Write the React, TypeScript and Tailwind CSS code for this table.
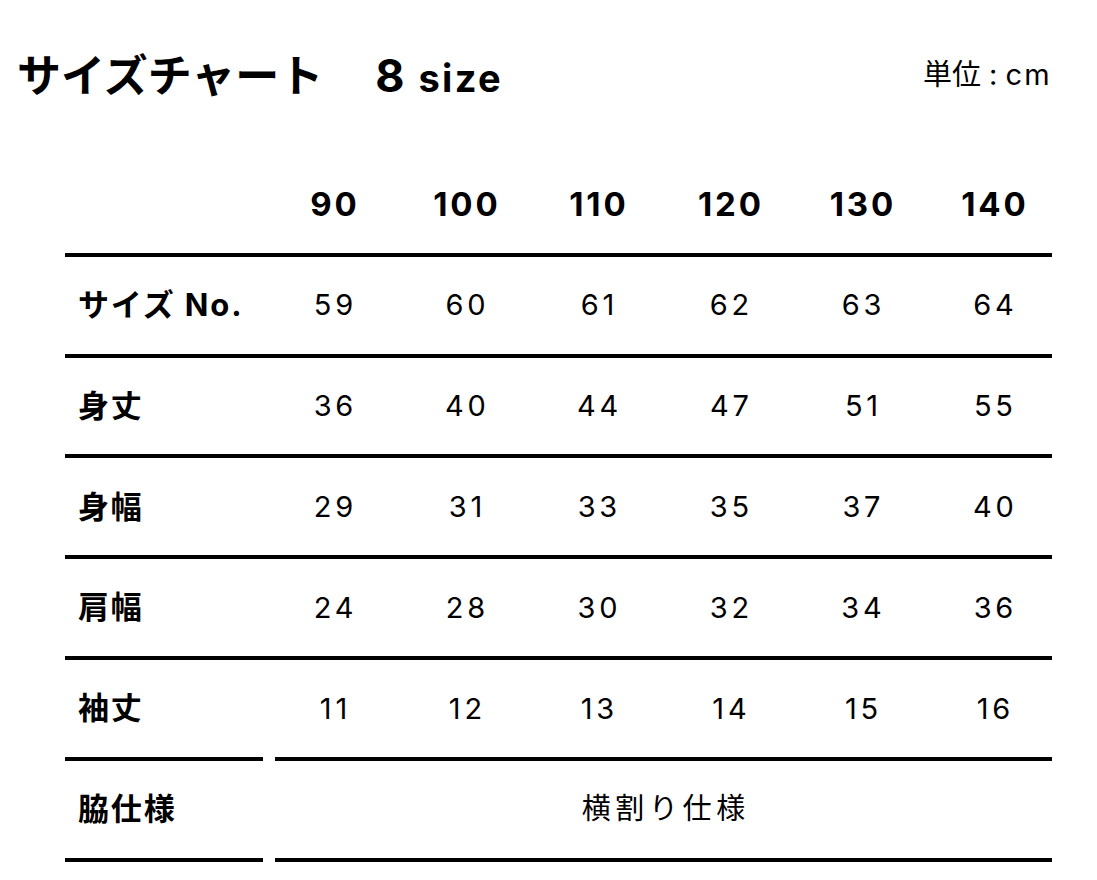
import React from 'react';

const sizes = ['90', '100', '110', '120', '130', '140'];

const rows: { label: string; values?: string[]; text?: string; split?: boolean }[] = [
  { label: 'サイズ No.', values: ['59', '60', '61', '62', '63', '64'] },
  { label: '身丈', values: ['36', '40', '44', '47', '51', '55'] },
  { label: '身幅', values: ['29', '31', '33', '35', '37', '40'] },
  { label: '肩幅', values: ['24', '28', '30', '32', '34', '36'] },
  { label: '袖丈', values: ['11', '12', '13', '14', '15', '16'], split: true },
  { label: '脇仕様', text: '横割り仕様', split: true },
];

const font = { fontFamily: 'Inter, "Noto Sans CJK JP", sans-serif' };

const Row: React.FC<{ label?: string; split?: boolean; children: React.ReactNode }> = ({ label, split, children }) => (
  <div className={`flex h-[100.8px] ${split ? '' : 'border-b-4 border-black'}`}>
    <div className={`w-[198px] shrink-0 flex items-center pl-[13px] text-[31px] font-bold tracking-[0.06em] ${split ? 'border-b-4 border-black' : ''}`}>
      {label}
    </div>
    <div className={`ml-[12px] flex-1 flex items-center ${split ? 'border-b-4 border-black' : ''}`}>{children}</div>
  </div>
);

const Cells: React.FC<{ values: string[]; bold?: boolean }> = ({ values, bold }) => (
  <div className="-mx-[7.5px] grid flex-1 grid-cols-6">
    {values.map((v, i) => (
      <div
        key={i}
        className={`text-center ${bold ? 'text-[33px] font-bold tracking-[0.09em] pl-[0.09em]' : 'text-[29px] tracking-[0.13em] pl-[0.13em]'}`}
      >
        {v}
      </div>
    ))}
  </div>
);

export default function App() {
  return (
    <div className="min-h-screen bg-white text-black" style={font}>
      <div className="w-[1052px] pl-[17px]">
        <div className="flex items-center justify-between h-[156px]">
          <div className="flex items-baseline font-bold -mt-[4px]">
            <span className="text-[44px]">サイズチャート</span>
            <span className="ml-[52px] text-[45px]">8</span>
            <span className="ml-[14px] text-[38px] tracking-[0.06em]">size</span>
          </div>
          <div className="text-[29px] -mt-[6px]">
            単位<span className="mx-[8px]">:</span>
            <span className="tracking-[0.08em]">cm</span>
          </div>
        </div>
        <div className="ml-[48px]">
          <Row>
            <Cells values={sizes} bold />
          </Row>
          {rows.map((r) => (
            <Row key={r.label} label={r.label} split={r.split}>
              {r.values ? (
                <Cells values={r.values} />
              ) : (
                <div className="flex-1 text-center text-[29px] tracking-[0.16em] pl-[0.16em]">{r.text}</div>
              )}
            </Row>
          ))}
        </div>
      </div>
    </div>
  );
}
